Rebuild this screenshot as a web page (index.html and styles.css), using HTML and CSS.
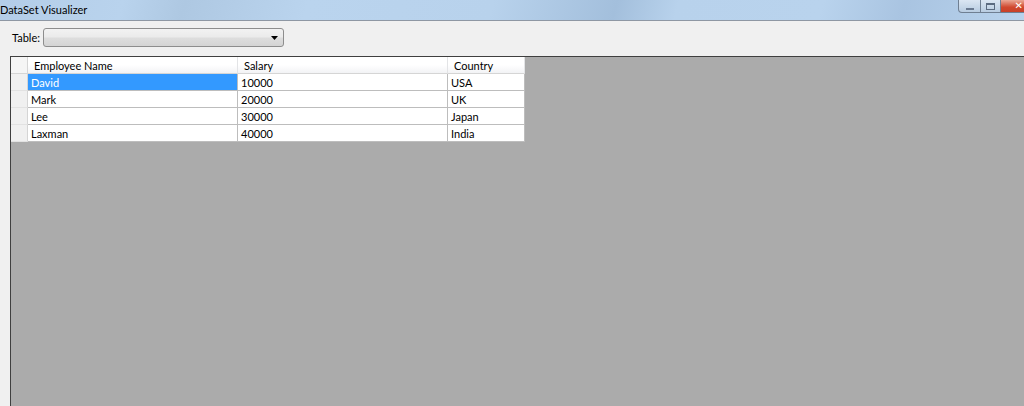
FILE: index.html
```html
<!DOCTYPE html>
<html lang="en">
<head>
    <meta charset="UTF-8">
    <title>DataSet Visualizer</title>
    <link rel="stylesheet" href="styles.css">
</head>
<body>

<div class="window">
    <div class="titlebar">
        <span class="title">DataSet Visualizer</span>
        <div class="controls">
            <div class="ctrl ctrl-min"><span class="min-glyph"></span></div>
            <div class="ctrl ctrl-max"><span class="max-glyph"></span></div>
            <div class="ctrl ctrl-close"><span class="close-glyph">✕</span></div>
        </div>
    </div>

    <div class="toolbar">
        <label class="table-label">Table:</label>
        <div class="combo">
            <svg class="combo-arrow" width="7" height="4" viewBox="0 0 7 4"><path d="M0 0 H7 L3.5 4 Z" fill="#000"/></svg>
        </div>
    </div>

    <div class="grid-area">
        <div class="grid">
            <div class="hcell corner"></div>
            <div class="hcell">Employee Name</div>
            <div class="hcell">Salary</div>
            <div class="hcell">Country</div>

            <div class="rowhead"></div>
            <div class="cell selected">David</div>
            <div class="cell">10000</div>
            <div class="cell">USA</div>

            <div class="rowhead"></div>
            <div class="cell">Mark</div>
            <div class="cell">20000</div>
            <div class="cell">UK</div>

            <div class="rowhead"></div>
            <div class="cell">Lee</div>
            <div class="cell">30000</div>
            <div class="cell">Japan</div>

            <div class="rowhead"></div>
            <div class="cell">Laxman</div>
            <div class="cell">40000</div>
            <div class="cell">India</div>
        </div>
    </div>
</div>

</body>
</html>
```

FILE: styles.css
```css
html, body {
    margin: 0;
    padding: 0;
    height: 100%;
    overflow: hidden;
}
body {
    font-family: Lato, "Open Sans", sans-serif;
    font-size: 11px;
    color: #000;
    background-color: #f0f0f0;
}
.window {
    display: flex;
    flex-direction: column;
    height: 406px;
}
.titlebar {
    height: 20px;
    border-bottom: 1px solid #8e97a3;
    background: linear-gradient(105deg, #b3cde8 0%, #b9d3ed 12%, #aec8e2 18%, #bad4ee 30%, #b8d2ec 48%, #a3bfdc 60%, #b8d2ec 66%, #b9d3ed 80%, #a9c4e1 88%, #b9d3ed 100%);
    display: flex;
    align-items: center;
    justify-content: space-between;
}
.title {
    font-size: 11px;
    margin-top: -2px;
}
.controls {
    display: flex;
    align-self: flex-start;
}
.ctrl {
    height: 13px;
    border: 1px solid #6f7f92;
    border-top: none;
    display: flex;
    align-items: center;
    justify-content: center;
    box-sizing: border-box;
    flex-shrink: 0;
}
.ctrl-min {
    width: 23px;
    border-radius: 0 0 0 4px;
    background: linear-gradient(#dbe6f2, #b8cce1);
}
.ctrl-max {
    width: 20px;
    border-left: none;
    background: linear-gradient(#dbe6f2, #b8cce1);
}
.ctrl-close {
    width: 23px;
    border-left: none;
    border-right: none;
    background: linear-gradient(#eaa896, #d0482e 60%, #c8412a);
    justify-content: flex-end;
    padding-right: 1px;
}
.close-glyph {
    color: #fff;
    font-family: "DejaVu Sans", sans-serif;
    font-size: 10px;
    font-weight: bold;
    line-height: 12px;
}
.min-glyph {
    width: 8px;
    height: 2px;
    margin-top: 5px;
    background: #6a7a90;
}
.max-glyph {
    width: 7px;
    height: 4px;
    border: 1px solid #5b6b80;
    border-top-width: 2px;
}
.toolbar {
    display: flex;
    align-items: center;
    height: 35px;
    padding-left: 12px;
}
.table-label {
    width: 31px;
    margin-top: -2px;
}
.combo {
    width: 241px;
    height: 19px;
    box-sizing: border-box;
    border: 1px solid #8d8d8d;
    border-radius: 3px;
    background: linear-gradient(#f2f2f2 0%, #ebebeb 45%, #dddddd 55%, #d4d4d4 100%);
    display: flex;
    align-items: center;
    justify-content: flex-end;
    padding-right: 5px;
    margin-top: -2px;
}
.grid-area {
    flex: 1;
    margin-left: 10px;
    border-top: 1px solid #3f3f3f;
    border-left: 1px solid #3f3f3f;
    background-color: #ababab;
}
.grid {
    display: grid;
    grid-template-columns: 17px 210px 210px 77px;
    grid-auto-rows: 17px;
    width: max-content;
}
.hcell, .cell, .rowhead {
    box-sizing: border-box;
    border-right: 1px solid #bdbdbd;
    border-bottom: 1px solid #bdbdbd;
    white-space: nowrap;
    line-height: 16px;
    padding-top: 1px;
}
.hcell {
    background: linear-gradient(#ffffff 0%, #ffffff 50%, #f2f3f5 100%);
    border-right-color: #e3e4e6;
    border-bottom-color: #d5d5d5;
    padding-left: 6px;
}
.hcell.corner {
    background: #f5f5f5;
    border-right-color: #d5d5d5;
}
.rowhead {
    background: #f0f0f0;
    border-right-color: #d5d5d5;
    border-bottom-color: #e2e2e2;
}
.cell {
    background: #fff;
    padding-left: 3px;
}
.cell.selected {
    background: #3399ff;
    color: #fff;
}
```
